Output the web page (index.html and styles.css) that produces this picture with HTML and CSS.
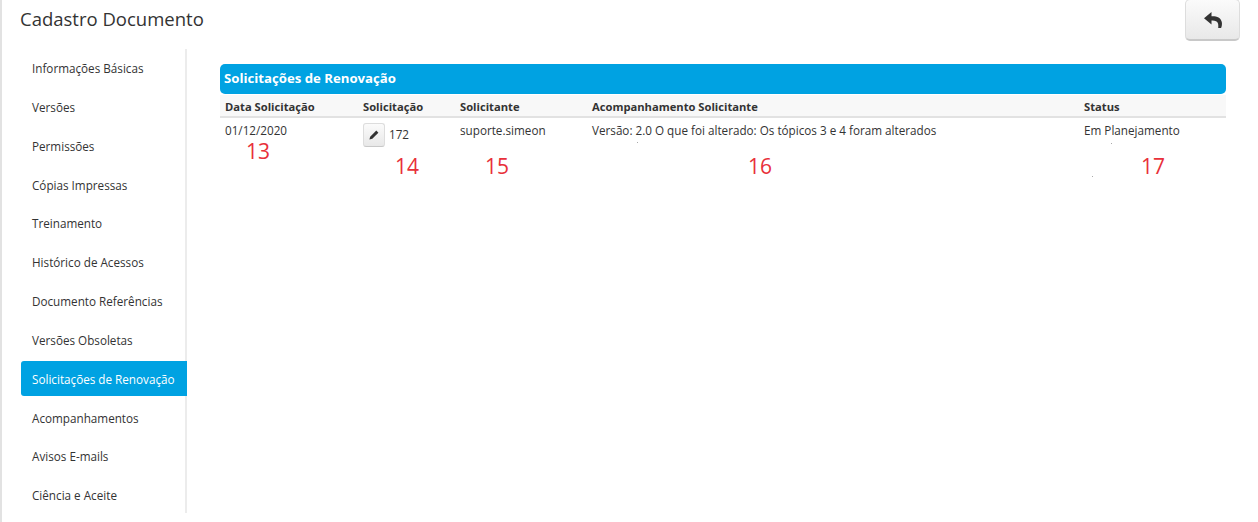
FILE: index.html
```html
<!DOCTYPE html>
<html lang="pt-BR">
<head>
<meta charset="utf-8">
<title>Cadastro Documento</title>
<link rel="stylesheet" href="styles.css">
</head>
<body>
<div class="page">
  <header class="top">
    <h1 class="title">Cadastro Documento</h1>
    <button class="back" aria-label="Voltar">
      <svg width="18" height="16" viewBox="0 0 18 16"><path d="M7.5 0 0 6.300 7.500 12.500V8.600c3.300-.2 5.700.5 6.500 2.900.3 1.100.4 2.500.2 4.500h2.900c.9-2.200 1.100-4.300.6-6.200C16.700 5.400 12.900 4 7.500 4.200z" fill="#333"/></svg>
    </button>
  </header>
  <div class="main">
    <nav class="side">
      <a class="item">Informações Básicas</a>
      <a class="item">Versões</a>
      <a class="item">Permissões</a>
      <a class="item">Cópias Impressas</a>
      <a class="item">Treinamento</a>
      <a class="item">Histórico de Acessos</a>
      <a class="item">Documento Referências</a>
      <a class="item">Versões Obsoletas</a>
      <a class="item active">Solicitações de Renovação</a>
      <a class="item">Acompanhamentos</a>
      <a class="item">Avisos E-mails</a>
      <a class="item">Ciência e Aceite</a>
    </nav>
    <section class="content">
      <h2 class="bar">Solicitações de Renovação</h2>
      <div class="row head">
        <div>Data Solicitação</div>
        <div>Solicitação</div>
        <div>Solicitante</div>
        <div>Acompanhamento Solicitante</div>
        <div>Status</div>
      </div>
      <div class="row body">
        <div>01/12/2020</div>
        <div class="req">
          <span class="edit">
            <svg width="10" height="10" viewBox="0 0 10 10"><path d="M7.300.6 9.400 2.700 3.300 8.800.4 9.600 1.200 6.700z" fill="#333"/></svg>
          </span>
          <span>172</span>
        </div>
        <div>suporte.simeon</div>
        <div>Versão: 2.0 O que foi alterado: Os tópicos 3 e 4 foram alterados</div>
        <div>Em Planejamento</div>
      </div>
    </section>
  </div>
  <span class="note n13">13</span>
  <span class="note n14">14</span>
  <span class="note n15">15</span>
  <span class="note n16">16</span>
  <span class="note n17">17</span>
  <i class="speck s1"></i>
  <i class="speck s2"></i>
  <i class="speck s3"></i>
</div>
</body>
</html>
```
FILE: styles.css
```css
* { box-sizing: border-box; }
html, body { margin: 0; height: 100%; background: #fff; }
body { font-family: "Open Sans", sans-serif; font-size: 11.7px; color: #333; overflow: hidden; }
.page { position: relative; height: 522px; border-left: 2px solid #e2e2e2; }
.top { display: flex; justify-content: space-between; align-items: flex-start; height: 49px; padding: 0 18px; }
.title { margin: 6px 0 0; font-size: 18.5px; font-weight: 400; line-height: 25px; color: #333; }
.back { width: 55px; height: 42px; margin-top: -1px; padding: 0; display: flex; align-items: center; justify-content: center; border: 1px solid #ddd; border-bottom: 2px solid #c8c8c8; border-radius: 5px; background: linear-gradient(#fbfbfb, #e8e8e8); }
.main { display: flex; height: 464px; }
.side { width: 167px; margin-left: 18px; border-right: 2px solid #ececec; display: grid; grid-auto-rows: 38.85px; padding-top: 1.5px; }
.item { display: flex; align-items: center; height: 35px; padding-left: 12px; margin-right: -2px; color: #333; white-space: nowrap; }
.active { margin-left: 1px; padding-left: 11px; background: #00a2e2; color: #fff; border-radius: 3px 0 0 3px; }
.content { width: 1006px; margin-left: 33px; padding-top: 15px; }
.bar { margin: 0; height: 30px; padding: 0 0 2px 4px; display: flex; align-items: center; font-size: 13.2px; font-weight: 700; color: #fff; background: #00a2e2; border-radius: 5px; }
.row { display: grid; grid-template-columns: 138px 97px 132px 492px 147px; }
.row > div { padding-left: 5px; }
.head { margin-top: 1px; height: 23px; padding-top: 2px; align-items: center; font-size: 11.2px; font-weight: 700; background: #f8f8f8; border-bottom: 2px solid #e2e2e2; }
.body { padding-top: 4px; line-height: 16px; }
.req { display: flex; align-items: flex-start; gap: 4px; }
.req span:last-child { margin-top: 4px; }
.edit { width: 22px; height: 24px; margin-top: 1px; display: flex; align-items: center; justify-content: center; border: 1px solid #ddd; border-bottom-color: #c8c8c8; border-radius: 3px; background: linear-gradient(#fbfbfb, #e8e8e8); }
.note { position: absolute; font-family: "Open Sans", sans-serif; font-size: 21px; line-height: 26px; color: #e8303a; }
.n13 { left: 244px; top: 138px; }
.n14 { left: 393px; top: 153px; }
.n15 { left: 483px; top: 153px; }
.n16 { left: 746px; top: 153px; }
.n17 { left: 1139px; top: 153px; }
.speck { position: absolute; width: 1px; height: 1px; background: #aaa; }
.s1 { left: 635px; top: 142px; }
.s2 { left: 1109px; top: 143px; }
.s3 { left: 1090px; top: 176px; }
```
